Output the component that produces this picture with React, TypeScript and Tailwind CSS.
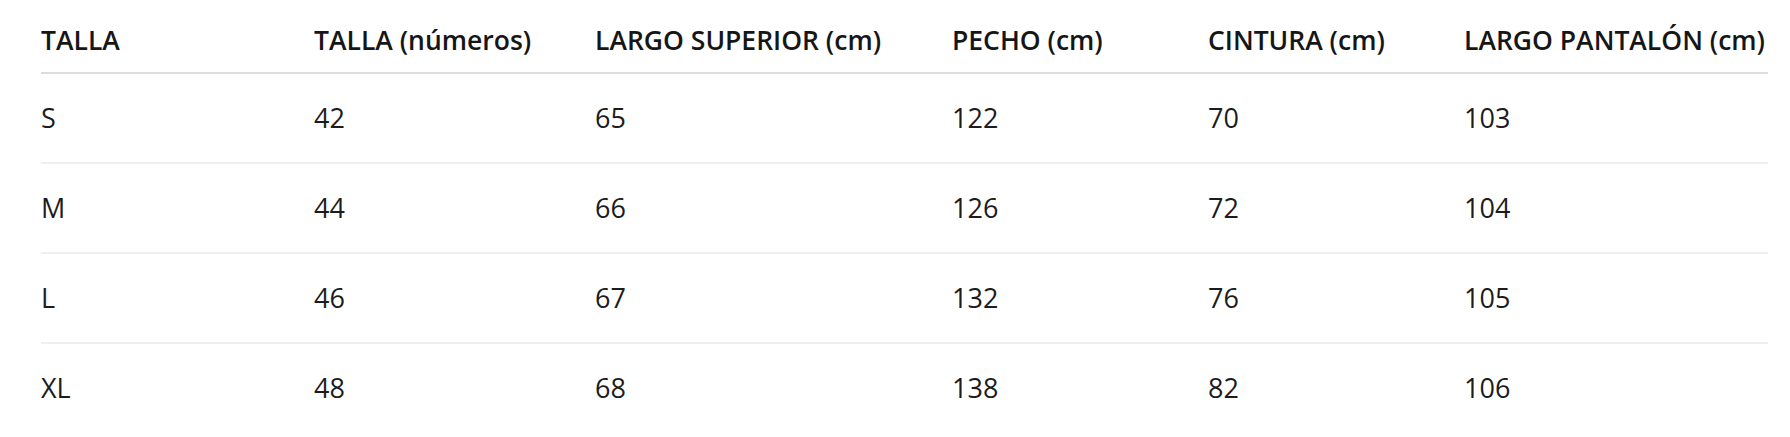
import React from "react";

const headers = [
  "TALLA",
  "TALLA (números)",
  "LARGO SUPERIOR (cm)",
  "PECHO (cm)",
  "CINTURA (cm)",
  "LARGO PANTALÓN (cm)",
];

const rows = [
  ["S", "42", "65", "122", "70", "103"],
  ["M", "44", "66", "126", "72", "104"],
  ["L", "46", "67", "132", "76", "105"],
  ["XL", "48", "68", "138", "82", "106"],
];

const widths = ["w-[273px]", "w-[281px]", "w-[357px]", "w-[256px]", "w-[256px]", "w-[304px]"];

const App = () => {
  return (
    <div className="bg-white w-[1790px] h-[437px] overflow-hidden font-['Open_Sans',sans-serif]">
      <table className="ml-[41px] w-[1727px] table-fixed border-collapse text-left">
        <colgroup>
          {widths.map((w, i) => (
            <col key={i} className={w} />
          ))}
        </colgroup>
        <thead>
          <tr className="border-b-2 border-[#dcdcdc]">
            {headers.map((h) => (
              <th
                key={h}
                className="pt-[20px] pb-[12px] text-[26.5px] leading-[40px] font-semibold text-[#161616] whitespace-nowrap"
              >
                {h}
              </th>
            ))}
          </tr>
        </thead>
        <tbody>
          {rows.map((row, r) => (
            <tr
              key={r}
              className={r < rows.length - 1 ? "border-b-2 border-[#f0f0f0]" : ""}
            >
              {row.map((cell, c) => (
                <td
                  key={c}
                  className="py-[24px] text-[27px] leading-[40px] font-normal text-[#1c1c1c]"
                >
                  {cell}
                </td>
              ))}
            </tr>
          ))}
        </tbody>
      </table>
    </div>
  );
};

export default App;
